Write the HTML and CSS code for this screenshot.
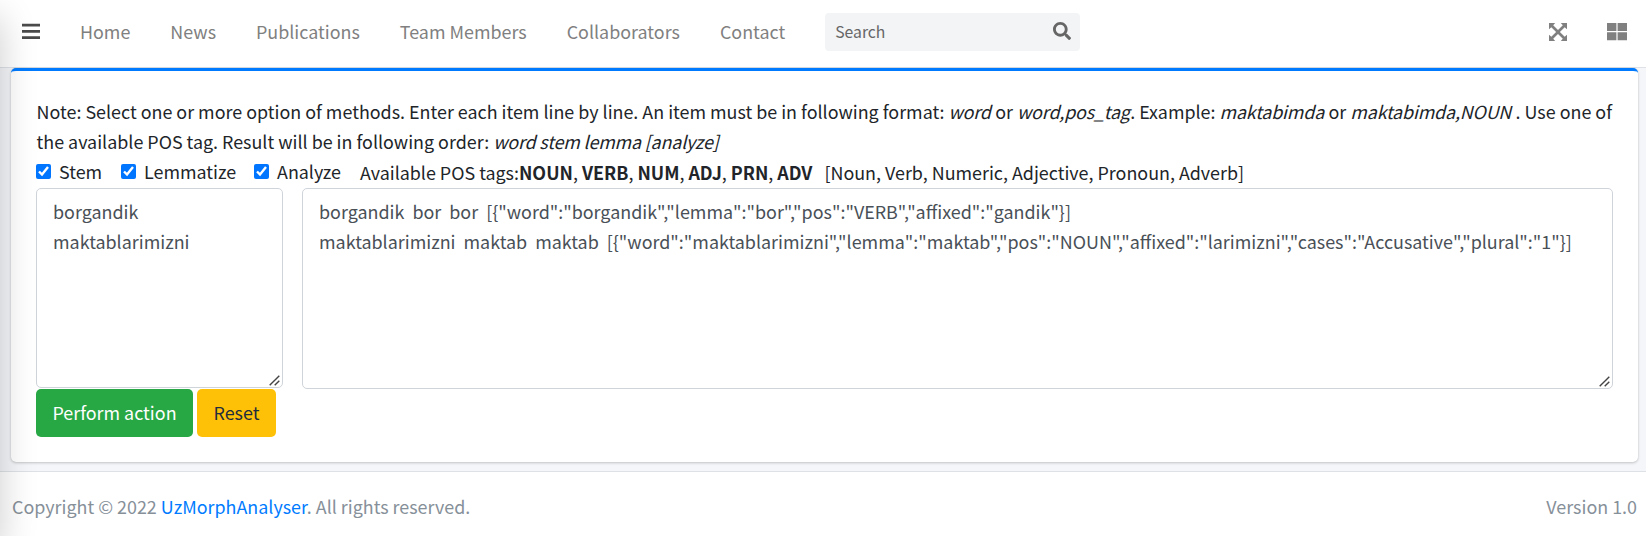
FILE: index.html
```html
<!DOCTYPE html>
<html lang="en">
<head>
<meta charset="utf-8">
<title>UzMorphAnalyser</title>
<link rel="stylesheet" href="styles.css">
</head>
<body>
<nav class="navbar">
  <a class="nav-toggle" href="#"><svg class="icon" viewBox="0 0 18 18"><path d="M0 .8h18v2.800H0zM0 7h18v2.800H0zM0 13.200h18V16H0z"/></svg></a>
  <ul class="nav-links">
    <li>Home</li><li>News</li><li>Publications</li><li>Team Members</li><li>Collaborators</li><li>Contact</li>
  </ul>
  <div class="search"><span>Search</span><svg class="icon search-icon" viewBox="0 0 512 512"><path d="M505 442.7L405.300 343c-4.500-4.500-10.600-7-17-7H372c27.600-35.300 44-79.700 44-128C416 93.100 322.900 0 208 0S0 93.100 0 208s93.100 208 208 208c48.300 0 92.700-16.400 128-44v16.300c0 6.400 2.500 12.500 7 17l99.700 99.700c9.400 9.400 24.600 9.400 33.900 0l28.300-28.300c9.400-9.400 9.400-24.600.1-34zM208 336c-70.700 0-128-57.200-128-128 0-70.700 57.200-128 128-128 70.700 0 128 57.200 128 128 0 70.700-57.200 128-128 128z"/></svg></div>
  <div class="nav-tools">
    <svg class="icon expand-icon" viewBox="0 0 18 18"><path d="M0 0h6.200L4.200 2.300 9 7.100l4.800-4.800L11.800 0H18v6.200l-2.300-2L10.900 9l4.800 4.800 2.300-2V18h-6.200l2-2.300L9 10.900l-4.800 4.800 2 2.300H0v-6.200l2.300 2L7.100 9 2.300 4.200 0 6.200z"/></svg>
    <svg class="icon grid-icon" viewBox="0 0 20 18"><path d="M0 0h9.400v8H0zM10.600 0H20v8h-9.400zM0 9.200h9.400v8H0zM10.600 9.200H20v8h-9.400z"/></svg>
  </div>
</nav>
<main class="content">
  <section class="card">
    <p class="note">Note: Select one or more option of methods. Enter each item line by line. An item must be in following format: <i>word</i> or <i>word,pos_tag</i>. Example: <i>maktabimda</i> or <i>maktabimda,NOUN</i> . Use one of<br>the available POS tag. Result will be in following order: <i>word stem lemma [analyze]</i></p>
    <div class="options">
      <label class="stem"><input type="checkbox" checked>Stem</label>
      <label class="lemmatize"><input type="checkbox" checked>Lemmatize</label>
      <label class="analyze"><input type="checkbox" checked>Analyze</label>
      <span class="tags">Available POS tags:<b>NOUN</b>, <b>VERB</b>, <b>NUM</b>, <b>ADJ</b>, <b>PRN</b>, <b>ADV</b> &nbsp;<span class="tag-names">[Noun, Verb, Numeric, Adjective, Pronoun, Adverb]</span></span>
    </div>
    <div class="fields">
      <div class="field source">
        <textarea spellcheck="false">borgandik
maktablarimizni</textarea>
        <svg class="grip" viewBox="0 0 11 11"><path d="M.7 10.300 10.300.7M5.700 10.300l4.600-4.600"/></svg>
      </div>
      <div class="field result">
        <textarea spellcheck="false">borgandik  bor  bor  [{"word":"borgandik","lemma":"bor","pos":"VERB","affixed":"gandik"}]
maktablarimizni  maktab  maktab  [{"word":"maktablarimizni","lemma":"maktab","pos":"NOUN","affixed":"larimizni","cases":"Accusative","plural":"1"}]</textarea>
        <svg class="grip" viewBox="0 0 11 11"><path d="M.7 10.300 10.300.7M5.700 10.300l4.600-4.600"/></svg>
      </div>
    </div>
    <div class="actions"><button class="btn perform">Perform action</button><button class="btn reset">Reset</button></div>
  </section>
</main>
<footer class="footer"><span>Copyright © 2022 <a href="#">UzMorphAnalyser</a>. All rights reserved.</span><span>Version 1.0</span></footer>
<aside class="drawer"></aside>
</body>
</html>
```
FILE: styles.css
```css
* { box-sizing: border-box; }
body {
  margin: 0;
  height: 536px;
  overflow: hidden;
  background: #f4f6f9;
  color: #212529;
  font: 17.9px/30px "Noto Sans CJK SC", sans-serif;
}
a { color: #007bff; text-decoration: none; }
i { margin-right: .4px; letter-spacing: -.16px; }
.icon { display: block; fill: currentColor; }
.navbar {
  display: flex;
  align-items: center;
  height: 68px;
  padding: 0 19px 3px 22px;
  background: #fff;
  border-bottom: 1px solid #dee2e6;
  color: #808080;
}
.nav-toggle { width: 18px; color: #4a4a4a; }
.nav-toggle .icon { width: 18px; height: 18px; }
.nav-links {
  display: flex;
  gap: 40px;
  margin: 0 0 2px 40px;
  padding: 0;
  list-style: none;
  white-space: nowrap;
}
.search {
  display: flex;
  align-items: center;
  justify-content: space-between;
  width: 255px;
  height: 38px;
  margin-left: 40px;
  padding: 0 9px 0 10px;
  border-radius: 4px;
  background: #f2f4f6;
  color: #666;
  font-size: 15.75px;
}
.search-icon { width: 18px; height: 18px; margin-bottom: 2px; }
.nav-tools { display: flex; align-items: center; gap: 40px; margin-left: auto; }
.expand-icon { width: 18px; height: 18px; }
.grid-icon { width: 20px; height: 18px; }
.content { height: 403px; padding: 0 8px 0 11px; }
.card {
  height: 394px;
  padding: 25px 25px 0;
  border-top: 3px solid #007bff;
  border-radius: 5px;
  background: #fff;
  box-shadow: 0 0 1px rgba(0,0,0,.13), 0 1px 3px rgba(0,0,0,.2);
}
.note { margin: 0; padding-left: .6px; white-space: nowrap; }
.options { display: flex; height: 32px; white-space: nowrap; }
.options label { display: flex; }
.options input { width: 15px; height: 15px; margin: 8px 8px 0 0; accent-color: #0075ff; }
.stem { width: 85px; }
.lemmatize { width: 133px; }
.analyze { width: 106px; }
.tags { padding-top: 1px; }
.tag-names { margin-left: 4px; }
.fields { display: flex; align-items: flex-start; gap: 19px; }
.field { position: relative; }
textarea {
  display: block;
  width: 100%;
  height: 100%;
  padding: 7px 16px;
  border: 1px solid #ced4da;
  border-radius: 5px;
  outline: 0;
  background: #fff;
  color: #495057;
  font: inherit;
  font-size: 17.91px;
  overflow: hidden;
  resize: none;
}
.grip {
  position: absolute;
  right: 3px;
  bottom: 2px;
  width: 11px;
  height: 11px;
  fill: none;
  stroke: #444;
  stroke-width: 1.4;
}
.source { width: 247px; height: 200px; }
.result { width: 1311px; height: 201px; }
.actions { display: flex; gap: 4px; }
.btn { height: 48px; padding: 0 0 2px; border: 0; border-radius: 5px; font: inherit; }
.perform { width: 157px; background: #28a745; color: #fff; }
.reset { width: 79px; background: #ffc107; color: #1f2d3d; }
.footer {
  display: flex;
  justify-content: space-between;
  height: 65px;
  padding: 19px 9px 0 12px;
  border-top: 1px solid #dee2e6;
  background: #fff;
  color: #869099;
}
.drawer {
  position: fixed;
  top: 0;
  left: -312px;
  width: 312px;
  height: 100vh;
  box-shadow: 0 17px 35px rgba(0,0,0,.2);
  pointer-events: none;
}
```
